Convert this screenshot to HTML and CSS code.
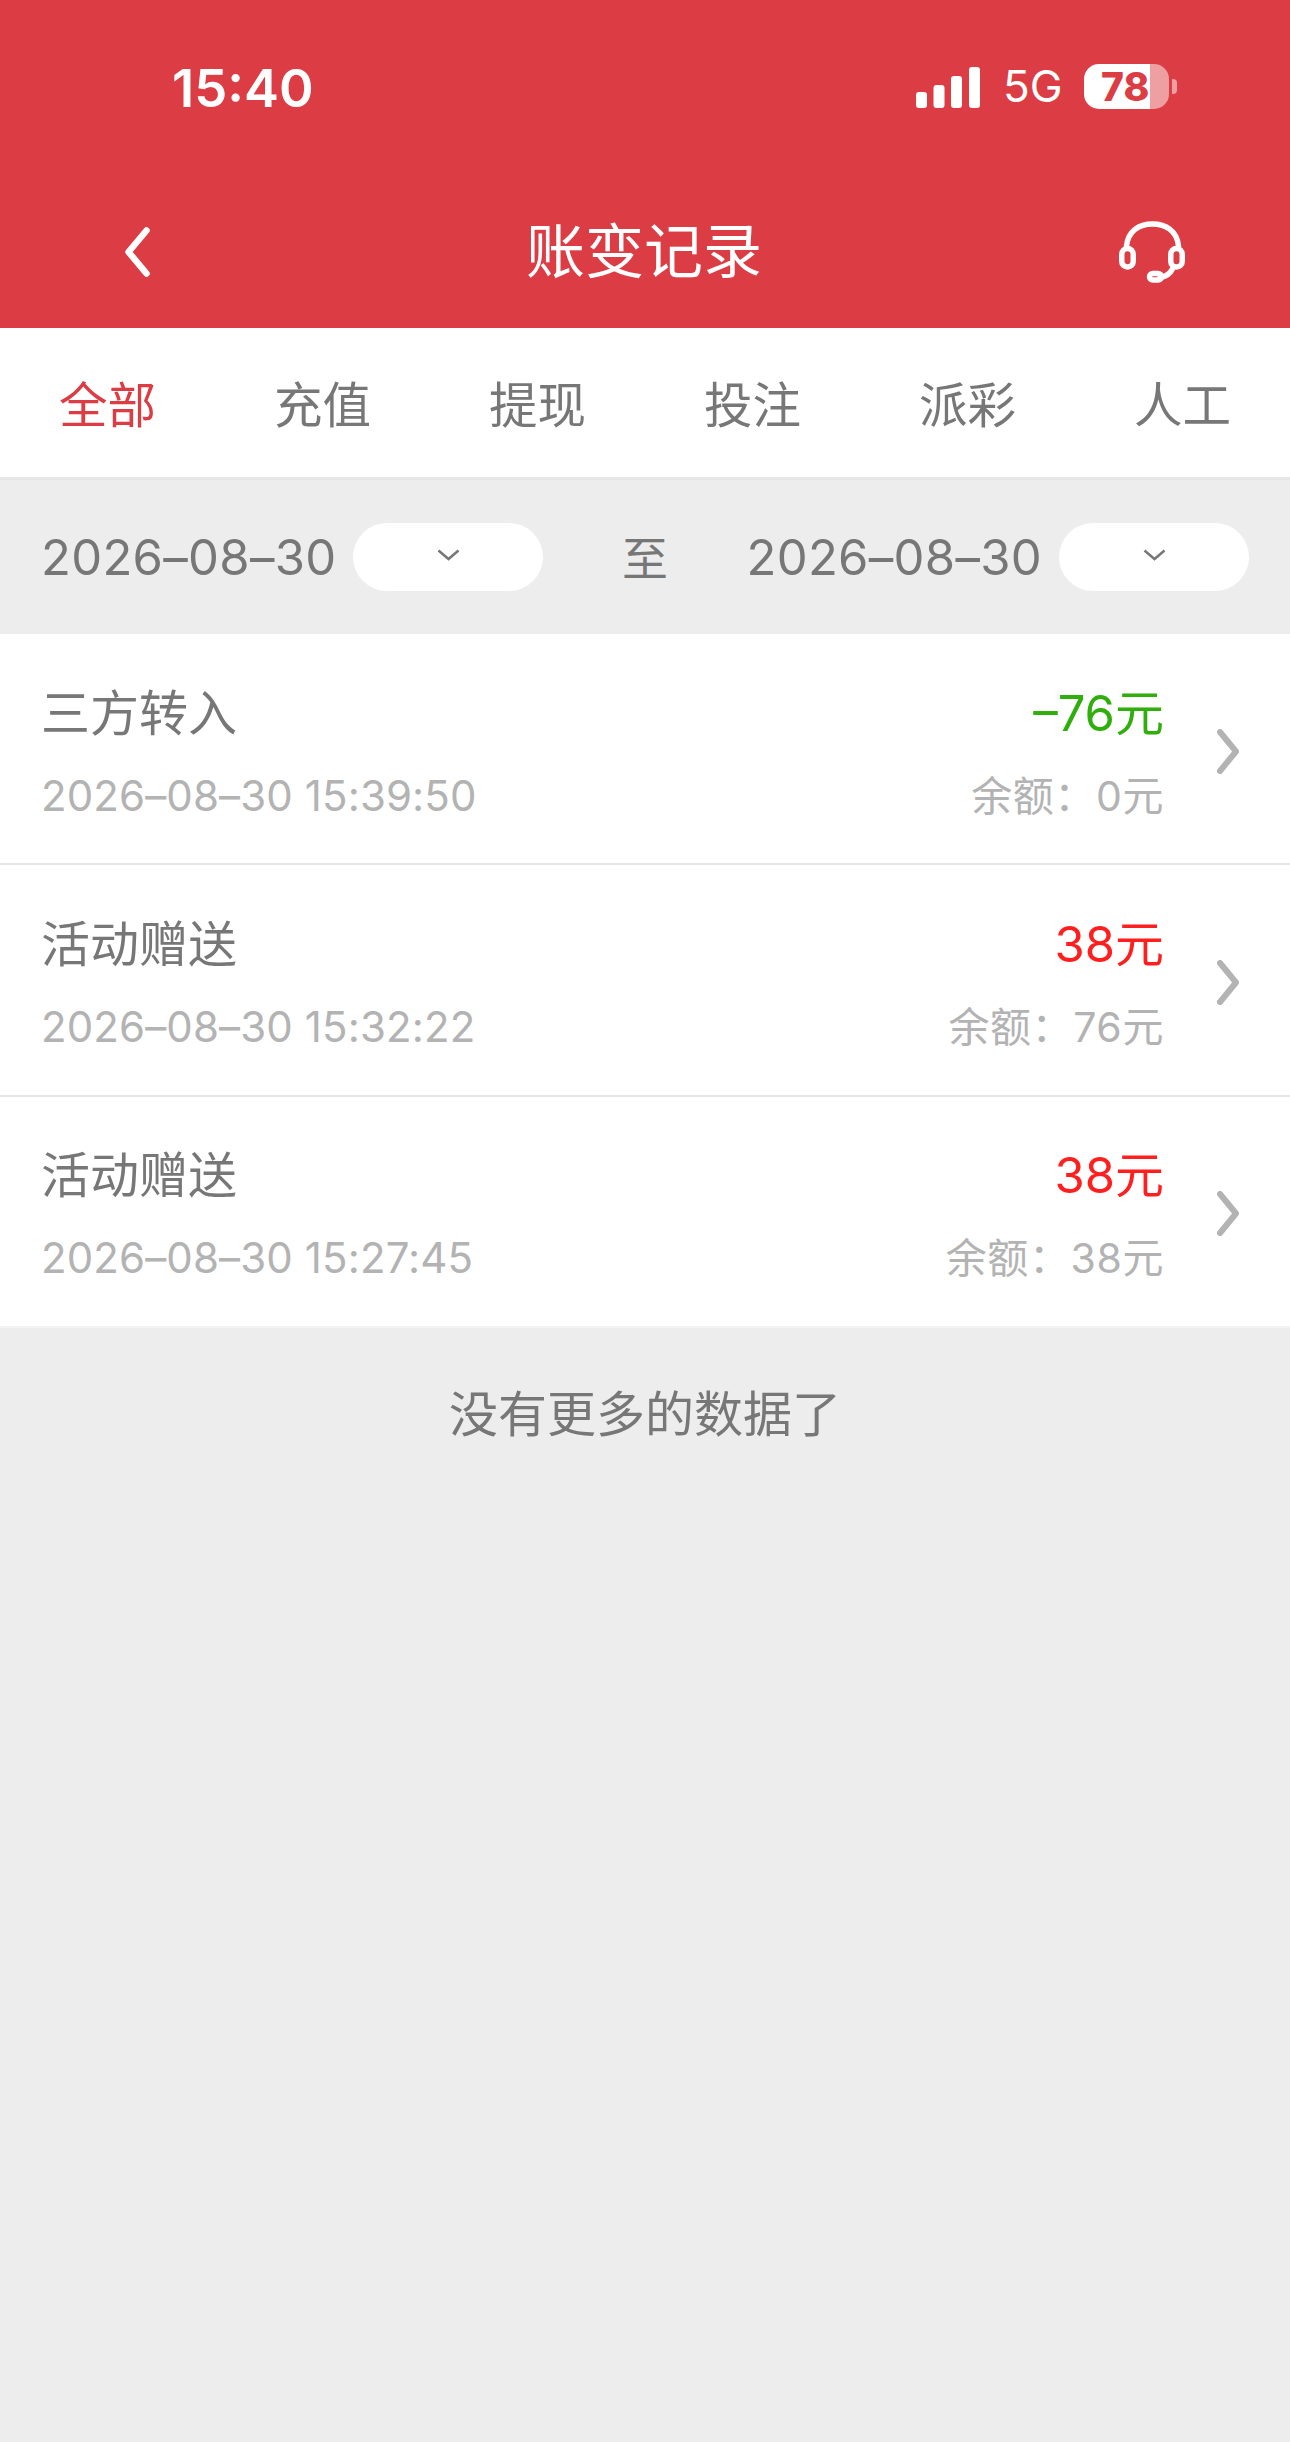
FILE: index.html
```html
<!DOCTYPE html>
<html lang="zh-CN">
<head>
<meta charset="utf-8">
<title>账变记录</title>
<link rel="stylesheet" href="styles.css">
</head>
<body>
<header class="header">
  <div class="status">
    <span class="time">15:40</span>
    <div class="status-right">
      <svg class="signal" width="64" height="41" viewBox="0 0 64 41"><rect x="0" y="25" width="11" height="16" rx="3"/><rect x="17.5" y="18" width="11" height="23" rx="3"/><rect x="35" y="9" width="11" height="32" rx="3"/><rect x="53" y="0" width="11" height="41" rx="3"/></svg>
      <span class="net">5G</span>
      <div class="battery"><div class="battery-body"><span class="battery-num">78</span></div><span class="battery-nub"></span></div>
    </div>
  </div>
  <nav class="nav">
    <svg class="back" width="25" height="50" viewBox="0 0 25 50"><path d="M21.5 3.5 L3.5 25 L21.5 46.5" fill="none" stroke="#fff" stroke-width="6.5" stroke-linecap="round" stroke-linejoin="round"/></svg>
    <h1 class="title">账变记录</h1>
    <svg class="headset" width="67" height="62" viewBox="0 0 67 62"><g fill="none" stroke="#fff" stroke-width="5.5" stroke-linecap="round"><path d="M7.5 25 C9 10 20 3 33.5 3 C47 3 58 10 59.5 25"/><rect x="2.75" y="27.5" width="11.5" height="18.5" rx="5.75"/><rect x="51.75" y="27.5" width="11.5" height="18.5" rx="5.75"/><path d="M54 47 C51 53 47 56 41 56.5"/><rect x="30.5" y="52.5" width="12" height="6.5" rx="3.25"/></g></svg>
  </nav>
</header>
<div class="tabs">
  <span class="tab is-active">全部</span>
  <span class="tab">充值</span>
  <span class="tab">提现</span>
  <span class="tab">投注</span>
  <span class="tab">派彩</span>
  <span class="tab">人工</span>
</div>
<div class="filter">
  <div class="date-group">
    <span class="date">2026–08–30</span>
    <div class="pill"><svg width="23" height="12" viewBox="0 0 23 12"><path d="M1.5 1.5 L11.5 10 L21.5 1.5" fill="none" stroke="#777" stroke-width="2.5"/></svg></div>
  </div>
  <span class="to">至</span>
  <div class="date-group">
    <span class="date">2026–08–30</span>
    <div class="pill"><svg width="23" height="12" viewBox="0 0 23 12"><path d="M1.5 1.5 L11.5 10 L21.5 1.5" fill="none" stroke="#777" stroke-width="2.5"/></svg></div>
  </div>
</div>
<ul class="list">
  <li class="row">
    <div class="row-left"><div class="row-title">三方转入</div><div class="row-time">2026–08–30 15:39:50</div></div>
    <div class="row-right"><div class="amount is-out">–76元</div><div class="balance">余额：0元</div></div>
    <svg class="arrow" width="22" height="45" viewBox="0 0 22 45"><path d="M3 3 L19 22.5 L3 42" fill="none" stroke="#b3b3b3" stroke-width="6" stroke-linecap="round" stroke-linejoin="round"/></svg>
  </li>
  <li class="row">
    <div class="row-left"><div class="row-title">活动赠送</div><div class="row-time">2026–08–30 15:32:22</div></div>
    <div class="row-right"><div class="amount is-in">38元</div><div class="balance">余额：76元</div></div>
    <svg class="arrow" width="22" height="45" viewBox="0 0 22 45"><path d="M3 3 L19 22.5 L3 42" fill="none" stroke="#b3b3b3" stroke-width="6" stroke-linecap="round" stroke-linejoin="round"/></svg>
  </li>
  <li class="row">
    <div class="row-left"><div class="row-title">活动赠送</div><div class="row-time">2026–08–30 15:27:45</div></div>
    <div class="row-right"><div class="amount is-in">38元</div><div class="balance">余额：38元</div></div>
    <svg class="arrow" width="22" height="45" viewBox="0 0 22 45"><path d="M3 3 L19 22.5 L3 42" fill="none" stroke="#b3b3b3" stroke-width="6" stroke-linecap="round" stroke-linejoin="round"/></svg>
  </li>
</ul>
<p class="end">没有更多的数据了</p>
</body>
</html>
```
FILE: styles.css
```css
* { box-sizing: border-box; }
html, body { margin: 0; padding: 0; }
body {
  width: 1290px;
  height: 2442px;
  overflow: hidden;
  background: #ededed;
  color: #777;
  font-family: "Inter", "Noto Sans CJK SC", sans-serif;
}
.header { height: 328px; background: #dc3c43; color: #fff; }
.status {
  height: 172px;
  padding: 0 113px 0 172px;
  display: flex;
  align-items: center;
  justify-content: space-between;
}
.time { font-size: 52.5px; font-weight: 600; line-height: 60px; margin-top: 3px; }
.status-right { display: flex; align-items: center; }
.signal { fill: #fff; display: block; margin-top: 2px; }
.net { font-size: 44px; line-height: 50px; margin-left: 23px; width: 58px; }
.battery { display: flex; align-items: center; margin-left: 23px; }
.battery-body {
  width: 85px;
  height: 45px;
  border-radius: 15px;
  background: linear-gradient(to right, #fff 66px, #ee9fa2 66px);
  padding-left: 17px;
}
.battery-num { display: block; font-size: 39px; font-weight: 800; line-height: 45px; color: #dc3c43; }
.battery-nub { width: 5px; height: 15px; margin-left: 3px; background: #ee9fa2; border-radius: 0 4px 4px 0; }
.nav {
  height: 156px;
  display: grid;
  grid-template-columns: 1fr auto 1fr;
  align-items: center;
  padding: 3px 104px 0 102px;
}
.back { display: block; margin-left: 23px; }
.title { margin: 0; font-size: 59px; font-weight: 400; line-height: 70px; }
.headset { justify-self: end; display: block; }
.tabs { display: flex; height: 152px; background: #fff; border-bottom: 3px solid #e6e6e6; }
.tab { flex: 1; text-align: center; font-size: 48.5px; line-height: 155px; }
.tab.is-active { color: #dc3c43; }
.filter {
  height: 153px;
  padding: 2px 41px 0 41px;
  display: flex;
  align-items: center;
  justify-content: space-between;
}
.date-group { display: flex; align-items: center; gap: 17px; }
.date { font-size: 49px; line-height: 68px; letter-spacing: 0.3px; }
.to { font-size: 46px; line-height: 68px; }
.pill {
  width: 190px;
  height: 68px;
  border-radius: 34px;
  background: #fff;
  display: flex;
  align-items: center;
  justify-content: center;
  padding-bottom: 4px;
  margin-top: -2px;
}
.list { list-style: none; margin: 0; padding: 0; background: #fff; margin-top: 1px; }
.row {
  height: 231.4px;
  display: flex;
  padding: 49.5px 51px 0 41px;
  border-bottom: 2px solid #e6e6e6;
}
.row:last-child { border-bottom-color: #f2f2f2; }
.row-left { flex: 1; }
.row-title { font-size: 49px; line-height: 60px; }
.row-time { font-size: 42px; line-height: 60px; margin-top: 22px; color: #b3b3b3; letter-spacing: 0.12px; }
.row-right { text-align: right; }
.amount { font-size: 49px; line-height: 60px; }
.amount.is-out { color: #2fae0c; }
.amount.is-in { color: #ff1f1f; }
.balance { font-size: 41px; line-height: 60px; margin-top: 22px; color: #b3b3b3; letter-spacing: 0.6px; }
.arrow { display: block; margin: 45px 0 0 53px; }
.end { margin: 0; padding-top: 57px; text-align: center; font-size: 49px; line-height: 60px; }
```
